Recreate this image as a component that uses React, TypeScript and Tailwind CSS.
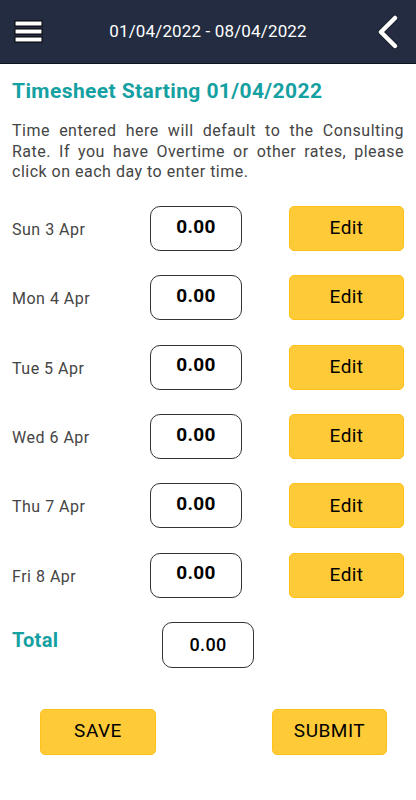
import React from "react";

const days = ["Sun 3 Apr", "Mon 4 Apr", "Tue 5 Apr", "Wed 6 Apr", "Thu 7 Apr", "Fri 8 Apr"];

function MenuIcon() {
  return (
    <svg width="30" height="24" viewBox="0 0 30 24">
      <rect x="1" y="1" width="27" height="5" fill="#fff" stroke="#000" strokeWidth="1" />
      <rect x="1" y="9" width="27" height="5" fill="#fff" stroke="#000" strokeWidth="1" />
      <rect x="1" y="17" width="27" height="5" fill="#fff" stroke="#000" strokeWidth="1" />
    </svg>
  );
}

function BackIcon() {
  return (
    <svg width="24" height="34" viewBox="0 0 24 34">
      <path d="M19 3 L5 17 L19 31" fill="none" stroke="#000" strokeWidth="6" strokeLinecap="round" strokeLinejoin="round" opacity="0.5" />
      <path d="M19 3 L5 17 L19 31" fill="none" stroke="#fff" strokeWidth="4.5" strokeLinecap="round" strokeLinejoin="round" />
    </svg>
  );
}

export default function App() {
  return (
    <div className="w-[416px] min-h-[800px] bg-white font-['Roboto',sans-serif]">
      {/* Header */}
      <header className="h-[64px] bg-[#232c40] border-b border-[#0d121c] flex items-center justify-between pl-[14px] pr-[16px]">
        <MenuIcon />
        <span className="text-white text-[17px] leading-none tracking-[0.15px] mr-[4px]">01/04/2022 - 08/04/2022</span>
        <BackIcon />
      </header>

      <div className="px-3">
        <h1 className="mt-[13px] text-[21px] leading-[28px] font-bold tracking-[0.4px] text-[#15a0a2]">
          Timesheet Starting 01/04/2022
        </h1>
        <p className="mt-[16px] text-[16px] leading-[20.6px] tracking-[0.5px] text-[#454545] text-justify">
          Time entered here will default to the Consulting Rate. If you have Overtime or other rates, please click on each day to enter time.
        </p>

        {/* Days */}
        <div className="mt-[23px] flex flex-col gap-[24.4px]">
          {days.map((d) => (
            <div key={d} className="flex items-center h-[45px]">
              <span className="w-[138px] pt-[3px] text-[16px] tracking-[0.5px] text-[#454545]">{d}</span>
              <div className="w-[92px] h-[45px] rounded-[10px] border border-[#333] flex items-center justify-center pb-[3px] text-[19px] font-bold tracking-[0.3px] text-black">
                0.00
              </div>
              <button className="ml-auto w-[115px] h-[45px] rounded-[5px] bg-[#ffca38] border border-[#ffc21a] text-[19px] tracking-[0.4px] text-black">
                Edit
              </button>
            </div>
          ))}
        </div>

        {/* Total */}
        <div className="mt-[24px] flex items-center h-[46px]">
          <span className="w-[150px] text-[20px] font-bold tracking-[0.3px] text-[#15a0a2] pb-[9px]">Total</span>
          <div className="w-[92px] h-[46px] rounded-[10px] border border-[#333] flex items-center justify-center text-[18px] font-medium tracking-[0.3px] text-black">
            0.00
          </div>
        </div>

        {/* Actions */}
        <div className="mt-[41px] flex justify-between pl-[28px] pr-[17px]">
          <button className="w-[116px] h-[46px] rounded-[5px] bg-[#ffca38] border border-[#ffc21a] text-[19px] tracking-[0.5px] text-black">
            SAVE
          </button>
          <button className="w-[115px] h-[46px] rounded-[5px] bg-[#ffca38] border border-[#ffc21a] text-[19px] tracking-[0.5px] text-black">
            SUBMIT
          </button>
        </div>
      </div>
    </div>
  );
}
